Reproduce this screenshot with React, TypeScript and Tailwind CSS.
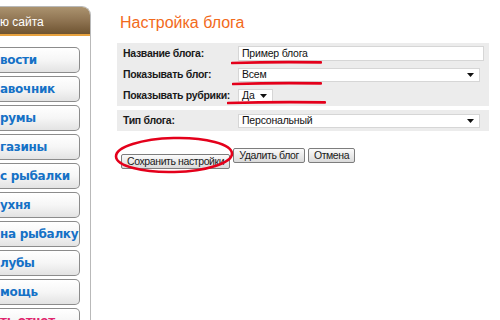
import React from 'react'

const menu = [
  { label: 'вости' },
  { label: 'авочник' },
  { label: 'румы' },
  { label: 'газины' },
  { label: 'с рыбалки' },
  { label: 'ухня' },
  { label: 'на рыбалку' },
  { label: 'лубы' },
  { label: 'мощь' },
  { label: 'ть отчет', pink: true },
]

function RedLine({ className, width }: { className: string; width: number }) {
  return (
    <svg className={`absolute pointer-events-none ${className}`} width={width} height={5} viewBox={`0 0 ${width} 5`}>
      <path d={`M1 3 Q ${width / 2} 1.6 ${width - 1} 2.4`} stroke="#e4001b" strokeWidth={2.6} fill="none" strokeLinecap="round" />
    </svg>
  )
}

function Arrow() {
  return (
    <svg width="7" height="4" viewBox="0 0 7 4" className="shrink-0">
      <path d="M0 0 H7 L3.5 4 Z" fill="#111" />
    </svg>
  )
}

function Select({ value, className }: { value: string; className: string }) {
  return (
    <div className={`h-[14px] bg-white border border-[#d6d6d6] flex items-center justify-between pl-[3px] pr-[5px] text-[10.5px] tracking-[-0.2px] text-[#111] ${className}`}>
      <span>{value}</span>
      <Arrow />
    </div>
  )
}

function Row({ label, children }: { label: string; children: React.ReactNode }) {
  return (
    <div className="h-[21px] flex items-center">
      <div className="w-[115px] shrink-0 whitespace-nowrap font-bold text-[10.5px] tracking-[-0.3px] text-[#1a1a1a]">{label}</div>
      {children}
    </div>
  )
}

function Btn({ children }: { children: React.ReactNode }) {
  return (
    <button className="h-[15px] px-[5px] whitespace-nowrap border border-[#7d7d7d] rounded-[2px] bg-gradient-to-b from-[#fbfbfb] to-[#dadada] text-[10.5px] tracking-[-0.4px] leading-[13px] text-[#1a1a1a]">
      {children}
    </button>
  )
}

export default function App() {
  return (
    <div
      className="w-[500px] h-[320px] overflow-hidden bg-white flex"
      style={{ fontFamily: '"Liberation Sans", Arial, sans-serif' }}
    >
      {/* Sidebar */}
      <div className="w-[91px] shrink-0 pt-[6px] h-[340px]">
        <div className="h-full border-t border-r border-[#b9b9b9] rounded-tr-[9px] overflow-hidden">
          <div className="h-[29px] bg-gradient-to-b from-[#ab936f] via-[#8f7452] to-[#6f5431] border-b-2 border-[#e7a23f] flex items-center text-white text-[12px] leading-none pt-[3px]">
            ю сайта
          </div>
          <div className="pt-[11px] pr-[10px] flex flex-col gap-[3px]">
            {menu.map((m) => (
              <div
                key={m.label}
                className="h-[26px] border border-l-0 border-[#8c8c8c] rounded-r-[5px] bg-gradient-to-b from-white via-[#f6f6f6] to-[#e3e3e3] flex items-center whitespace-nowrap overflow-hidden"
              >
                <span
                  className={`font-bold text-[12px] tracking-[-0.3px] ${m.pink ? 'text-[#e0256d]' : 'text-[#1571c6]'}`}
                  style={{ fontFamily: '"DejaVu Sans", Verdana, sans-serif' }}
                >
                  {m.label}
                </span>
              </div>
            ))}
          </div>
        </div>
      </div>

      {/* Main */}
      <div className="pl-[26px] pt-[14px] w-[398px]">
        <h1 className="pl-[3px] text-[16px] leading-[18px] text-[#f26a1b]">Настройка блога</h1>

        <div className="mt-[11px] bg-[#ececec] pl-[6px] pr-[5px]">
          <Row label="Название блога:">
            <div className="relative flex-1">
              <div className="h-[15px] bg-white border border-[#d6d6d6] pl-[3px] text-[10.5px] tracking-[-0.2px] leading-[13px] text-[#111]">
                Пример блога
              </div>
              <RedLine className="-left-[7px] top-[14px]" width={91} />
            </div>
          </Row>
          <Row label="Показывать блог:">
            <div className="relative flex-1 pr-[4px]">
              <Select value="Всем" className="w-full" />
              <RedLine className="-left-[6px] top-[13px]" width={90} />
            </div>
          </Row>
          <Row label="Показывать рубрики:">
            <div className="relative">
              <Select value="Да" className="w-[35px]" />
              <RedLine className="-left-[11px] top-[11px]" width={99} />
            </div>
          </Row>
        </div>

        <div className="mt-[4px] bg-[#ececec] pl-[6px] pr-[9px]">
          <Row label="Тип блога:">
            <Select value="Персональный" className="flex-1" />
          </Row>
        </div>

        <div className="mt-[17px] pl-[4px] flex gap-[3px]">
          <div className="relative">
            <Btn>Сохранить настройки</Btn>
            <svg className="absolute -left-[7px] -top-[12px] pointer-events-none" width="120" height="38" viewBox="0 0 120 38">
              <ellipse cx="60" cy="19" rx="58" ry="17" stroke="#e4001b" strokeWidth="2.6" fill="none" transform="rotate(-1.5 60 19)" />
            </svg>
          </div>
          <Btn>Удалить блог</Btn>
          <Btn>Отмена</Btn>
        </div>
      </div>
    </div>
  )
}
